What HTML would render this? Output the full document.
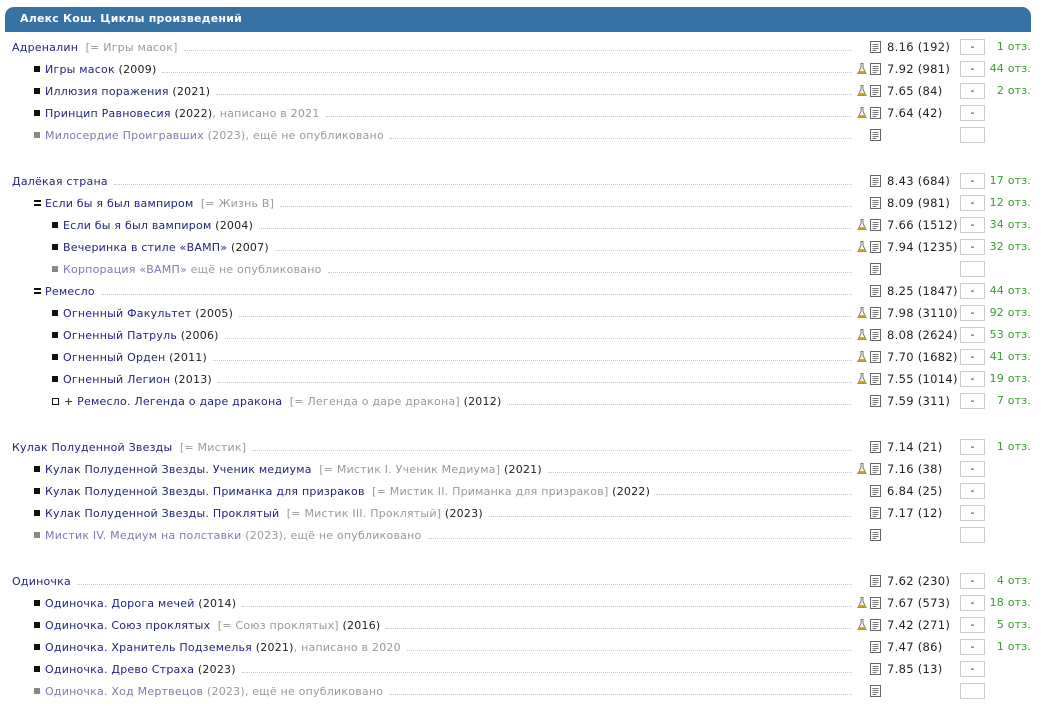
<!DOCTYPE html>
<html><head><meta charset="utf-8"><style>
body{margin:0;width:1052px;height:711px;background:#fff;font-family:"DejaVu Sans","Liberation Sans",sans-serif;font-size:11px;color:#222;position:relative;overflow:hidden}
.hd{position:absolute;left:5px;top:7px;width:1026px;height:25px;background:#3672a4;border-radius:9px 9px 0 0;color:#fff;font-weight:bold;font-size:11px;line-height:24px;box-sizing:border-box;padding-left:15px;letter-spacing:0.2px}
.r{position:absolute;left:0;width:1052px;height:22px}
.t{position:absolute;top:0;height:22px;right:200px;display:flex;align-items:center;white-space:nowrap;letter-spacing:0.22px}
.d{flex:1;border-bottom:1px dotted #c4c4c4;margin:7px 0 0 6px;height:0}
a{color:#23237f;text-decoration:none}
.g{color:#999}
.gl{color:#7b7bb0}
.b{display:inline-block;width:6px;height:6px;background:#111;margin-right:5px}
.bg{background:#888}
.bo{background:#fff;border:1px solid #111;width:5px;height:5px}
.eq{display:inline-block;width:7px;height:6px;border-top:2px solid #111;border-bottom:2px solid #111;box-sizing:border-box;margin-right:4px}
.f{position:absolute;left:857px;top:5px;width:10px;height:12px}
.doc{position:absolute;left:870px;top:5px;width:11px;height:12px}
.rt{position:absolute;left:887px;top:0;line-height:22px;letter-spacing:0.3px;font-size:11.5px}
.bx{position:absolute;left:960px;top:3px;width:25px;height:16px;border:1px solid #ccc;box-sizing:border-box;text-align:center;line-height:14px}
.o{position:absolute;right:21px;top:0;line-height:22px;color:#3a9a32;letter-spacing:0.2px}
</style></head><body>
<svg width="0" height="0" style="position:absolute"><defs><symbol id="dc" viewBox="0 0 11 12"><rect x="0.5" y="0.5" width="10" height="11" fill="#fff" stroke="#666"/><path d="M2.5 3.5h6M2.5 5.5h6M2.5 7.5h6M2.5 9.5h4" stroke="#777"/></symbol><symbol id="fl" viewBox="0 0 10 12"><path d="M3.5 0.5h3M4 0.5v4L1 10.5h8L6 4.5v-4" fill="none" stroke="#777"/><path d="M2 8h6l1 2.5H1z" fill="#d4a41c"/></symbol></defs></svg>
<div class="hd">Алекс Кош. Циклы произведений</div>

<div class="r" style="top:36px"><div class="t" style="left:12px"><a>Адреналин</a>&nbsp;&nbsp;<span class="g">[= Игры масок]</span><span class="d"></span></div><svg class="doc"><use href="#dc"/></svg><span class="rt">8.16 (192)</span><span class="bx">-</span><span class="o">1 отз.</span></div>
<div class="r" style="top:58px"><div class="t" style="left:34px"><span class="b"></span><a>Игры масок</a>&nbsp;(2009)<span class="d"></span></div><svg class="f"><use href="#fl"/></svg><svg class="doc"><use href="#dc"/></svg><span class="rt">7.92 (981)</span><span class="bx">-</span><span class="o">44 отз.</span></div>
<div class="r" style="top:80px"><div class="t" style="left:34px"><span class="b"></span><a>Иллюзия поражения</a>&nbsp;(2021)<span class="d"></span></div><svg class="f"><use href="#fl"/></svg><svg class="doc"><use href="#dc"/></svg><span class="rt">7.65 (84)</span><span class="bx">-</span><span class="o">2 отз.</span></div>
<div class="r" style="top:102px"><div class="t" style="left:34px"><span class="b"></span><a>Принцип Равновесия</a>&nbsp;(2022)<span class="g">, написано в 2021</span><span class="d"></span></div><svg class="f"><use href="#fl"/></svg><svg class="doc"><use href="#dc"/></svg><span class="rt">7.64 (42)</span><span class="bx">-</span></div>
<div class="r" style="top:124px"><div class="t" style="left:34px"><span class="b bg"></span><a class="gl">Милосердие Проигравших</a><span class="g">&nbsp;(2023), ещё не опубликовано</span><span class="d"></span></div><svg class="doc"><use href="#dc"/></svg><span class="bx"></span></div>

<div class="r" style="top:170px"><div class="t" style="left:12px"><a>Далёкая страна</a><span class="d"></span></div><svg class="doc"><use href="#dc"/></svg><span class="rt">8.43 (684)</span><span class="bx">-</span><span class="o">17 отз.</span></div>
<div class="r" style="top:192px"><div class="t" style="left:34px"><span class="eq"></span><a>Если бы я был вампиром</a>&nbsp;&nbsp;<span class="g">[= Жизнь В]</span><span class="d"></span></div><svg class="doc"><use href="#dc"/></svg><span class="rt">8.09 (981)</span><span class="bx">-</span><span class="o">12 отз.</span></div>
<div class="r" style="top:214px"><div class="t" style="left:52px"><span class="b"></span><a>Если бы я был вампиром</a>&nbsp;(2004)<span class="d"></span></div><svg class="f"><use href="#fl"/></svg><svg class="doc"><use href="#dc"/></svg><span class="rt">7.66 (1512)</span><span class="bx">-</span><span class="o">34 отз.</span></div>
<div class="r" style="top:236px"><div class="t" style="left:52px"><span class="b"></span><a>Вечеринка в стиле «ВАМП»</a>&nbsp;(2007)<span class="d"></span></div><svg class="f"><use href="#fl"/></svg><svg class="doc"><use href="#dc"/></svg><span class="rt">7.94 (1235)</span><span class="bx">-</span><span class="o">32 отз.</span></div>
<div class="r" style="top:258px"><div class="t" style="left:52px"><span class="b bg"></span><a class="gl">Корпорация «ВАМП»</a><span class="g">&nbsp;ещё не опубликовано</span><span class="d"></span></div><svg class="doc"><use href="#dc"/></svg><span class="bx"></span></div>
<div class="r" style="top:280px"><div class="t" style="left:34px"><span class="eq"></span><a>Ремесло</a><span class="d"></span></div><svg class="doc"><use href="#dc"/></svg><span class="rt">8.25 (1847)</span><span class="bx">-</span><span class="o">44 отз.</span></div>
<div class="r" style="top:302px"><div class="t" style="left:52px"><span class="b"></span><a>Огненный Факультет</a>&nbsp;(2005)<span class="d"></span></div><svg class="f"><use href="#fl"/></svg><svg class="doc"><use href="#dc"/></svg><span class="rt">7.98 (3110)</span><span class="bx">-</span><span class="o">92 отз.</span></div>
<div class="r" style="top:324px"><div class="t" style="left:52px"><span class="b"></span><a>Огненный Патруль</a>&nbsp;(2006)<span class="d"></span></div><svg class="f"><use href="#fl"/></svg><svg class="doc"><use href="#dc"/></svg><span class="rt">8.08 (2624)</span><span class="bx">-</span><span class="o">53 отз.</span></div>
<div class="r" style="top:346px"><div class="t" style="left:52px"><span class="b"></span><a>Огненный Орден</a>&nbsp;(2011)<span class="d"></span></div><svg class="f"><use href="#fl"/></svg><svg class="doc"><use href="#dc"/></svg><span class="rt">7.70 (1682)</span><span class="bx">-</span><span class="o">41 отз.</span></div>
<div class="r" style="top:368px"><div class="t" style="left:52px"><span class="b"></span><a>Огненный Легион</a>&nbsp;(2013)<span class="d"></span></div><svg class="f"><use href="#fl"/></svg><svg class="doc"><use href="#dc"/></svg><span class="rt">7.55 (1014)</span><span class="bx">-</span><span class="o">19 отз.</span></div>
<div class="r" style="top:390px"><div class="t" style="left:52px"><span class="b bo"></span>+&nbsp;<a>Ремесло. Легенда о даре дракона</a>&nbsp;&nbsp;<span class="g">[= Легенда о даре дракона]</span>&nbsp;(2012)<span class="d"></span></div><svg class="doc"><use href="#dc"/></svg><span class="rt">7.59 (311)</span><span class="bx">-</span><span class="o">7 отз.</span></div>

<div class="r" style="top:436px"><div class="t" style="left:12px"><a>Кулак Полуденной Звезды</a>&nbsp;&nbsp;<span class="g">[= Мистик]</span><span class="d"></span></div><svg class="doc"><use href="#dc"/></svg><span class="rt">7.14 (21)</span><span class="bx">-</span><span class="o">1 отз.</span></div>
<div class="r" style="top:458px"><div class="t" style="left:34px"><span class="b"></span><a>Кулак Полуденной Звезды. Ученик медиума</a>&nbsp;&nbsp;<span class="g">[= Мистик I. Ученик Медиума]</span>&nbsp;(2021)<span class="d"></span></div><svg class="f"><use href="#fl"/></svg><svg class="doc"><use href="#dc"/></svg><span class="rt">7.16 (38)</span><span class="bx">-</span></div>
<div class="r" style="top:480px"><div class="t" style="left:34px"><span class="b"></span><a>Кулак Полуденной Звезды. Приманка для призраков</a>&nbsp;&nbsp;<span class="g">[= Мистик II. Приманка для призраков]</span>&nbsp;(2022)<span class="d"></span></div><svg class="doc"><use href="#dc"/></svg><span class="rt">6.84 (25)</span><span class="bx">-</span></div>
<div class="r" style="top:502px"><div class="t" style="left:34px"><span class="b"></span><a>Кулак Полуденной Звезды. Проклятый</a>&nbsp;&nbsp;<span class="g">[= Мистик III. Проклятый]</span>&nbsp;(2023)<span class="d"></span></div><svg class="doc"><use href="#dc"/></svg><span class="rt">7.17 (12)</span><span class="bx">-</span></div>
<div class="r" style="top:524px"><div class="t" style="left:34px"><span class="b bg"></span><a class="gl">Мистик IV. Медиум на полставки</a><span class="g">&nbsp;(2023), ещё не опубликовано</span><span class="d"></span></div><svg class="doc"><use href="#dc"/></svg><span class="bx"></span></div>

<div class="r" style="top:570px"><div class="t" style="left:12px"><a>Одиночка</a><span class="d"></span></div><svg class="doc"><use href="#dc"/></svg><span class="rt">7.62 (230)</span><span class="bx">-</span><span class="o">4 отз.</span></div>
<div class="r" style="top:592px"><div class="t" style="left:34px"><span class="b"></span><a>Одиночка. Дорога мечей</a>&nbsp;(2014)<span class="d"></span></div><svg class="f"><use href="#fl"/></svg><svg class="doc"><use href="#dc"/></svg><span class="rt">7.67 (573)</span><span class="bx">-</span><span class="o">18 отз.</span></div>
<div class="r" style="top:614px"><div class="t" style="left:34px"><span class="b"></span><a>Одиночка. Союз проклятых</a>&nbsp;&nbsp;<span class="g">[= Союз проклятых]</span>&nbsp;(2016)<span class="d"></span></div><svg class="f"><use href="#fl"/></svg><svg class="doc"><use href="#dc"/></svg><span class="rt">7.42 (271)</span><span class="bx">-</span><span class="o">5 отз.</span></div>
<div class="r" style="top:636px"><div class="t" style="left:34px"><span class="b"></span><a>Одиночка. Хранитель Подземелья</a>&nbsp;(2021)<span class="g">, написано в 2020</span><span class="d"></span></div><svg class="doc"><use href="#dc"/></svg><span class="rt">7.47 (86)</span><span class="bx">-</span><span class="o">1 отз.</span></div>
<div class="r" style="top:658px"><div class="t" style="left:34px"><span class="b"></span><a>Одиночка. Древо Страха</a>&nbsp;(2023)<span class="d"></span></div><svg class="doc"><use href="#dc"/></svg><span class="rt">7.85 (13)</span><span class="bx">-</span></div>
<div class="r" style="top:680px"><div class="t" style="left:34px"><span class="b bg"></span><a class="gl">Одиночка. Ход Мертвецов</a><span class="g">&nbsp;(2023), ещё не опубликовано</span><span class="d"></span></div><svg class="doc"><use href="#dc"/></svg><span class="bx"></span></div>
</body></html>
